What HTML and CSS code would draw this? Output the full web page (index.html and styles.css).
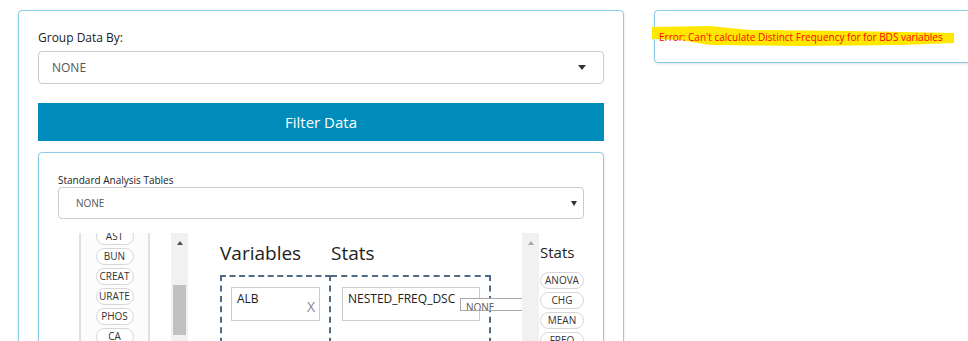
FILE: index.html
```html
<!DOCTYPE html>
<html lang="en">
<head>
    <meta charset="UTF-8">
    <meta name="viewport" content="width=device-width, initial-scale=1.0">
    <title>Analysis Builder</title>
    <link rel="stylesheet" href="styles.css">
</head>
<body>

<div class="page">
    <!-- Left: grouping, filter and analysis builder -->
    <div class="panel main-panel">
        <label class="field-label">Group Data By:</label>
        <div class="select select-large">
            <span>NONE</span>
            <span class="caret"></span>
        </div>

        <button class="filter-btn">Filter Data</button>

        <div class="panel inner-panel">
            <label class="field-label small">Standard Analysis Tables</label>
            <div class="select select-small">
                <span>NONE</span>
                <svg class="caret-small" width="6" height="5" viewBox="0 0 6 5"><path d="M0 0H6L3 5Z" fill="#333"/></svg>
            </div>

            <div class="builder-row">
                <!-- Variable list -->
                <div class="var-list">
                    <div class="pill-stack">
                        <span class="pill">AST</span>
                        <span class="pill">BUN</span>
                        <span class="pill">CREAT</span>
                        <span class="pill">URATE</span>
                        <span class="pill">PHOS</span>
                        <span class="pill">CA</span>
                    </div>
                </div>
                <div class="scrollbar">
                    <span class="arrow"></span>
                    <span class="thumb"></span>
                </div>

                <!-- Drop area -->
                <div class="builder">
                    <div class="builder-area">
                        <div class="drop-col vars">
                            <h3>Variables</h3>
                            <div class="drop-box">
                                <div class="drop-item">
                                    <span>ALB</span>
                                    <span class="remove">X</span>
                                </div>
                            </div>
                        </div>
                        <div class="drop-col stats">
                            <h3>Stats</h3>
                            <div class="drop-box">
                                <div class="drop-item">
                                    <span>NESTED_FREQ_DSC</span>
                                    <div class="mini-select">NONE</div>
                                </div>
                            </div>
                        </div>
                    </div>
                    <div class="scrollbar light">
                        <span class="arrow"></span>
                    </div>
                </div>

                <!-- Stats list -->
                <div class="stats-list">
                    <h4>Stats</h4>
                    <div class="pill-stack">
                        <span class="pill">ANOVA</span>
                        <span class="pill">CHG</span>
                        <span class="pill">MEAN</span>
                        <span class="pill">FREQ</span>
                    </div>
                </div>
            </div>
        </div>
    </div>

    <!-- Right: error message -->
    <div class="panel error-panel">
        <svg class="highlight" width="310" height="30" viewBox="0 0 310 30">
            <path d="M2 3L60 2L100 6L200 7L304 9L304 19L250 21L150 22L60 21L30 16L2 15Z" fill="#ffe800"/>
        </svg>
        <p class="error-text">Error: Can't calculate Distinct Frequency for for BDS variables</p>
    </div>
</div>

</body>
</html>
```

FILE: styles.css
```css
* {
    box-sizing: border-box;
}
html, body {
    margin: 0;
    overflow: hidden;
    background-color: #fff;
    font-family: "Open Sans", Arial, sans-serif;
    color: #222;
}
.page {
    display: flex;
    align-items: flex-start;
    gap: 30px;
    padding: 10px 0 0 18px;
}
.panel {
    border: 1px solid #8bcde8;
    border-radius: 4px;
    background-color: #fff;
    box-shadow: 0px 1px 3px rgba(0, 0, 0, 0.12);
}
.main-panel {
    flex-shrink: 0;
    width: 606px;
    height: 420px;
    padding: 18px 19px 0;
}
.field-label {
    display: block;
    font-size: 12px;
    line-height: 17px;
    margin-bottom: 5px;
}
.field-label.small {
    font-size: 10px;
    line-height: 14px;
    margin-bottom: 0;
}
.select {
    display: flex;
    align-items: center;
    justify-content: space-between;
    border: 1px solid #ccc;
    border-radius: 4px;
    color: #555;
}
.select-large {
    height: 33px;
    padding: 0 17px 0 13px;
    font-size: 12px;
}
.caret {
    width: 0;
    height: 0;
    border-left: 4.5px solid transparent;
    border-right: 4.5px solid transparent;
    border-top: 5px solid #333;
}
.select-small {
    height: 32px;
    padding: 0 6px 0 17px;
    font-size: 10px;
}
.filter-btn {
    display: block;
    width: 100%;
    height: 38px;
    margin-top: 19px;
    border: none;
    background-color: #008cba;
    color: #fff;
    font-family: "Open Sans", Arial, sans-serif;
    font-size: 15px;
}
.inner-panel {
    width: 100%;
    height: 300px;
    margin-top: 11px;
    padding: 20px 19px 0;
}
.builder-row {
    display: flex;
    align-items: flex-start;
    margin-top: 14px;
    height: 130px;
}
.var-list {
    width: 72px;
    height: 130px;
    margin-left: 21px;
    border-left: 2px solid #e0e0e0;
    border-right: 2px solid #e0e0e0;
    background-color: #fcfcfc;
    overflow: hidden;
}
.pill-stack {
    display: flex;
    flex-direction: column;
    align-items: center;
    gap: 3px;
}
.var-list .pill-stack {
    margin-top: -5px;
}
.pill {
    width: 38px;
    height: 17px;
    border: 1px solid #d6d6d6;
    border-radius: 9px;
    background-color: #fff;
    font-size: 10px;
    line-height: 15px;
    text-align: center;
    color: #333;
}
.scrollbar {
    flex-shrink: 0;
    display: flex;
    flex-direction: column;
    align-items: center;
    width: 17px;
    height: 130px;
    margin-left: 21px;
    background-color: #f1f1f1;
}
.scrollbar .arrow {
    margin-top: 8px;
    width: 0;
    height: 0;
    border-left: 3px solid transparent;
    border-right: 3px solid transparent;
    border-bottom: 4px solid #505050;
}
.scrollbar .thumb {
    width: 13px;
    height: 50px;
    margin-top: 40px;
    background-color: #c1c1c1;
}
.scrollbar.light {
    margin-left: 0;
}
.scrollbar.light .arrow {
    border-bottom-color: #a8a8a8;
}
.builder {
    display: flex;
    flex-shrink: 0;
    width: 351px;
}
.builder-area {
    display: flex;
    width: 334px;
    height: 130px;
    padding: 7px 0 0 32px;
    overflow: hidden;
}
.drop-col h3 {
    margin: 0 0 9px;
    font-size: 19px;
    font-weight: normal;
    line-height: 26px;
}
.drop-col.vars {
    flex-shrink: 0;
    width: 111px;
}
.drop-col.stats {
    flex-shrink: 0;
    width: 160px;
}
.drop-box {
    height: 100px;
    border: 2px dashed #4e6a85;
    padding: 10px 9px;
}
.drop-col.stats .drop-box {
    border-left: none;
    padding-left: 11px;
}
.drop-item {
    position: relative;
    height: 34px;
    padding: 3px 5px 0;
    border: 1px solid #ccc;
    font-size: 12px;
    line-height: 16px;
    white-space: nowrap;
}
.remove {
    position: absolute;
    right: 4px;
    bottom: 6px;
    font-size: 14px;
    line-height: 14px;
    color: #888;
}
.mini-select {
    position: absolute;
    left: 117px;
    top: 10px;
    width: 80px;
    height: 13px;
    padding: 2px 0 0 5px;
    border: 1px solid #a8a8a8;
    background-color: #fff;
    font-size: 10px;
    line-height: 12px;
    color: #555;
    overflow: hidden;
}
.stats-list {
    flex-shrink: 0;
    width: 44px;
    margin-left: 1px;
    padding-top: 9px;
}
.stats-list h4 {
    margin: 0 0 10px;
    font-size: 15px;
    font-weight: normal;
    line-height: 20px;
}
.stats-list .pill {
    width: 44px;
}
.error-panel {
    position: relative;
    flex-shrink: 0;
    width: 330px;
    height: 53px;
    padding: 19px 0 0 4px;
}
.highlight {
    position: absolute;
    left: -5px;
    top: 13px;
}
.error-text {
    position: relative;
    margin: 0;
    font-size: 10px;
    line-height: 14px;
    color: #f00;
    white-space: nowrap;
}
```
